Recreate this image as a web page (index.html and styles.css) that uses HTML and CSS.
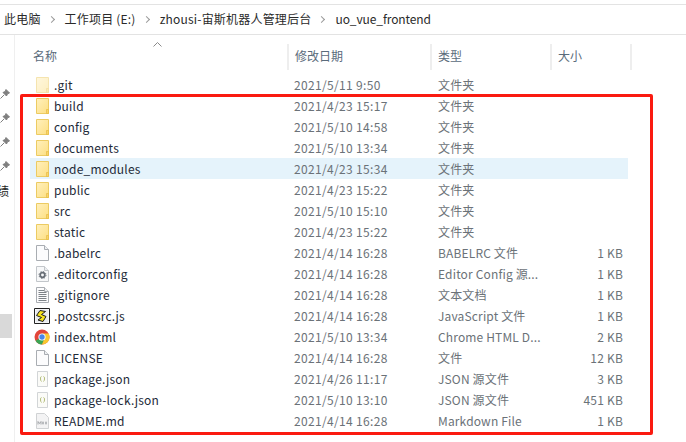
FILE: index.html
```html
<!DOCTYPE html>
<html lang="zh">
<head>
<meta charset="utf-8">
<title>uo_vue_frontend</title>
<link rel="stylesheet" href="styles.css">
</head>
<body>
<svg class="defs" width="0" height="0" aria-hidden="true">
  <defs>
    <linearGradient id="fg" x1="0" y1="0" x2="1" y2="1">
      <stop offset="0" stop-color="#fff0bd"/>
      <stop offset="1" stop-color="#fddf82"/>
    </linearGradient>
    <symbol id="folder" viewBox="0 0 13 16">
      <path d="M.5.5H12.500V15.500H.5Z" fill="url(#fg)" stroke="#eccb62"/>
      <path d="M10.500 11.500H12.500V15.500H10.500Z" fill="#f8d56b" stroke="#e6bb45" stroke-width=".7"/>
    </symbol>
    <symbol id="page" viewBox="0 0 13 16">
      <path d="M.5.5H8.500L12.500 4.500V15.500H.5Z" fill="#fcfcfd" stroke="#a9adb2"/>
      <path d="M8.500.5V4.500H12.500" fill="#eef0f2" stroke="#a9adb2"/>
    </symbol>
    <symbol id="pale" viewBox="0 0 13 16">
      <path d="M.5.5H8.500L12.500 4.500V15.500H.5Z" fill="#f7f8f9" stroke="#c2c6ca"/>
      <path d="M8.500.5V4.500H12.500" fill="#eceef0" stroke="#c2c6ca"/>
    </symbol>
    <symbol id="json" viewBox="0 0 13 16">
      <path d="M1.500.5H11.500V15.500H1.500Z" fill="#fbfbf8" stroke="#d2d5d7"/>
      <path d="M5.500 5.500Q4.300 5.500 4.500 8 4.500 9.500 5.500 10.500M7.500 5.500Q8.700 5.500 8.500 8 8.500 9.500 7.500 10.500" fill="none" stroke="#b4bd78"/>
    </symbol>
    <symbol id="pin" viewBox="0 0 10 10">
      <path d="M6 .5l3.500 3.500-2 .8-1 2.200-3.500-3.500 2.200-1zM4 6L.5 9.500" fill="#7f7f7f" stroke="#7f7f7f"/>
    </symbol>
  </defs>
</svg>
<div class="window">
  <nav class="crumbs">
    <span>此电脑</span><i class="sep"></i>
    <span>工作项目 (E:)</span><i class="sep"></i>
    <span>zhousi-宙斯机器人管理后台</span><i class="sep"></i>
    <span>uo_vue_frontend</span>
  </nav>
  <div class="body">
    <aside class="side">
      <svg class="pin"><use href="#pin"/></svg>
      <svg class="pin"><use href="#pin"/></svg>
      <svg class="pin"><use href="#pin"/></svg>
      <svg class="pin"><use href="#pin"/></svg>
      <div class="side-text">绩</div>
      <div class="side-active"></div>
    </aside>
    <main class="list">
      <div class="sort"><svg viewBox="0 0 9 5" width="9" height="5"><path d="M.5 4.500L4.500.5l4 4" fill="none" stroke="#8a8a8a"/></svg></div>
      <header class="row head">
        <div class="h name">名称</div>
        <div class="h">修改日期</div>
        <div class="h">类型</div>
        <div class="h">大小</div>
      </header>
      <div class="row dim"><svg class="ico"><use href="#folder"/></svg><span class="nm">.git</span><span class="dt">2021/5/11 9:50</span><span class="ty">文件夹</span><span></span></div>
      <div class="row"><svg class="ico"><use href="#folder"/></svg><span class="nm">build</span><span class="dt">2021/4/23 15:17</span><span class="ty">文件夹</span><span></span></div>
      <div class="row"><svg class="ico"><use href="#folder"/></svg><span class="nm">config</span><span class="dt">2021/5/10 14:58</span><span class="ty">文件夹</span><span></span></div>
      <div class="row"><svg class="ico"><use href="#folder"/></svg><span class="nm">documents</span><span class="dt">2021/5/10 13:34</span><span class="ty">文件夹</span><span></span></div>
      <div class="row hover"><svg class="ico"><use href="#folder"/></svg><span class="nm">node_modules</span><span class="dt">2021/4/23 15:34</span><span class="ty">文件夹</span><span></span></div>
      <div class="row"><svg class="ico"><use href="#folder"/></svg><span class="nm">public</span><span class="dt">2021/4/23 15:22</span><span class="ty">文件夹</span><span></span></div>
      <div class="row"><svg class="ico"><use href="#folder"/></svg><span class="nm">src</span><span class="dt">2021/5/10 15:10</span><span class="ty">文件夹</span><span></span></div>
      <div class="row"><svg class="ico"><use href="#folder"/></svg><span class="nm">static</span><span class="dt">2021/4/23 15:22</span><span class="ty">文件夹</span><span></span></div>
      <div class="row"><svg class="ico"><use href="#page"/></svg><span class="nm">.babelrc</span><span class="dt">2021/4/14 16:28</span><span class="ty">BABELRC 文件</span><span class="sz">1 KB</span></div>
      <div class="row"><svg class="ico" viewBox="0 0 13 16"><use href="#pale"/><circle cx="6.500" cy="9" r="2.300" fill="none" stroke="#666d75" stroke-width="1.700"/><circle cx="6.500" cy="9" r="3.500" fill="none" stroke="#666d75" stroke-width="1" stroke-dasharray="1.300 1.450"/></svg><span class="nm">.editorconfig</span><span class="dt">2021/4/14 16:28</span><span class="ty">Editor Config 源...</span><span class="sz">1 KB</span></div>
      <div class="row"><svg class="ico" viewBox="0 0 13 16"><use href="#page"/><path d="M2.500 3.500H8M2.500 5.500H10.500M2.500 7.500H10.500M2.500 9.500H10.500M2.500 11.500H10.500M2.500 13.500H10.500" stroke="#7e8388"/></svg><span class="nm">.gitignore</span><span class="dt">2021/4/14 16:28</span><span class="ty">文本文档</span><span class="sz">1 KB</span></div>
      <div class="row"><svg class="ico wide" viewBox="0 0 16 16"><path d="M.5.5H15.500V15.500H.5Z" fill="#fff" stroke="#222"/><path d="M1.500 1.500H14.500V14.500H1.500Z" fill="#e9ebee"/><path d="M6 2.500L11.500 3.500 7.500 6.500l4.500 2-3 5-5-1.500 3.500-2.500-5-2z" fill="#f5e21d" stroke="#1d1d1d"/></svg><span class="nm">.postcssrc.js</span><span class="dt">2021/4/14 16:28</span><span class="ty">JavaScript 文件</span><span class="sz">1 KB</span></div>
      <div class="row"><svg class="ico wide" viewBox="0 0 16 16"><circle cx="8" cy="8" r="7.500" fill="#e2453a"/><path d="M8 8L1.500 11.800A7.500 7.500 0 0 0 8 15.500L12 8Z" fill="#3aa655"/><path d="M8 4.500H14.700A7.500 7.500 0 0 1 8 15.500L11 8Z" fill="#f9c730"/><circle cx="8" cy="8" r="3.600" fill="#fff"/><circle cx="8" cy="8" r="2.700" fill="#4a86e8"/></svg><span class="nm">index.html</span><span class="dt">2021/5/10 13:34</span><span class="ty">Chrome HTML D...</span><span class="sz">2 KB</span></div>
      <div class="row"><svg class="ico"><use href="#page"/></svg><span class="nm">LICENSE</span><span class="dt">2021/4/14 16:28</span><span class="ty">文件</span><span class="sz">12 KB</span></div>
      <div class="row"><svg class="ico"><use href="#json"/></svg><span class="nm">package.json</span><span class="dt">2021/4/26 11:17</span><span class="ty">JSON 源文件</span><span class="sz">3 KB</span></div>
      <div class="row"><svg class="ico"><use href="#json"/></svg><span class="nm">package-lock.json</span><span class="dt">2021/5/10 13:10</span><span class="ty">JSON 源文件</span><span class="sz">451 KB</span></div>
      <div class="row"><svg class="ico" viewBox="0 0 13 16"><path d="M.5.5H8.500L12.500 4.500V15.500H.5Z" fill="#f3f3f4" stroke="#d0d2d4"/><path d="M2 11.500V8.500l1.500 2 1.500-2v3M7 8.500v3M6 10H8M10 8.500v3M9 10H11" fill="none" stroke="#a4a7ab"/></svg><span class="nm">README.md</span><span class="dt">2021/4/14 16:28</span><span class="ty">Markdown File</span><span class="sz">1 KB</span></div>
      <div class="mark"></div>
    </main>
  </div>
</div>
</body>
</html>
```
FILE: styles.css
```css
* { box-sizing: border-box; }
html, body { margin: 0; height: 100%; }
body {
  background: #fff;
  font-family: "Noto Sans CJK SC", "Noto Sans", sans-serif;
  font-size: 12px;
  color: #1e1e1e;
  overflow: hidden;
}
.defs { position: absolute; }
.window { width: 686px; height: 442px; padding-top: 4px; display: flex; flex-direction: column; }
.crumbs {
  height: 31px;
  flex: none;
  border-top: 1px solid #e3e3e3;
  border-bottom: 1px solid #e3e3e3;
  display: flex;
  align-items: center;
  padding: 0 0 2px 4px;
  font-size: 12px;
  color: #2a2a2a;
  letter-spacing: .2px;
}
.crumbs span:last-child { letter-spacing: -.1px; }
.sep {
  width: 5px; height: 5px; margin: 2px 11px 0 8px;
  border-top: 1.5px solid #9a9a9a; border-right: 1.5px solid #9a9a9a;
  transform: rotate(45deg);
}
.body { flex: 1; display: flex; min-height: 0; }
.side {
  width: 15px; flex: none;
  border-right: 1px solid #efefef;
  position: relative;
  padding-top: 54px;
  display: flex; flex-direction: column; gap: 14px;
  align-items: flex-start;
}
.pin { width: 10px; height: 10px; display: block; }
.side-text { font-size: 12px; line-height: 14px; margin-left: -3px; height: 14px; margin-top: -1px; }
.side-active { position: absolute; left: 0; top: 279px; width: 12px; height: 24px; background: #d9d9d9; }
.list { flex: 1; position: relative; padding-top: 9px; }
.sort { position: absolute; left: 138px; top: 7px; line-height: 0; }
.row {
  display: grid;
  grid-template-columns: 16px 243px 144px 113px 72px;
  align-items: center;
  height: 21px;
  width: 598px;
  margin-left: 15px;
  padding-left: 5px;
  white-space: nowrap;
  line-height: 21px;
}
.row > .ico { width: 13px; height: 16px; margin-left: 1px; }
.row > .ico.wide { width: 16px; height: 16px; margin-left: -1px; }
.nm { padding-left: 3px; color: #1e2a38; letter-spacing: .2px; }
.dt, .ty, .sz { color: #6b7278; }
.dt { letter-spacing: .33px; }
.ty { letter-spacing: .15px; }
.sz { text-align: right; display: block; letter-spacing: .2px; }
.hover { background: #e5f3fb; }
.dim .ico { opacity: .5; }
.head {
  height: 26px;
  margin-bottom: 4px;
  display: flex;
  padding-left: 0;
  margin-left: 0;
  width: 617px;
}
.h {
  height: 26px; line-height: 24px; color: #5a6b7b;
  border-right: 2px solid #eeeeee;
  padding-left: 6px;
}
.h.name { width: 274px; padding-left: 18px; }
.h:nth-child(2) { width: 143px; }
.h:nth-child(3) { width: 120px; }
.h:nth-child(4) { width: 80px; }
.mark {
  position: absolute;
  left: 5px; top: 59px;
  width: 633px; height: 341px;
  border: 3px solid #fa1a10;
  border-radius: 2px;
}
```
